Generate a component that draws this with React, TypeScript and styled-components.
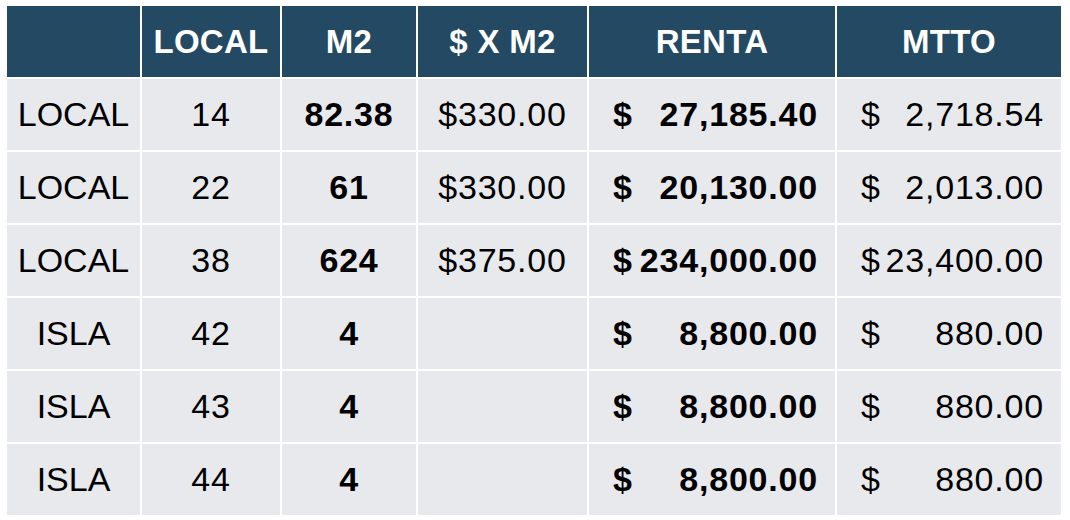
import React from 'react'
import styled, { createGlobalStyle } from 'styled-components'

const GlobalStyle = createGlobalStyle`
  html, body {
    margin: 0;
    padding: 0;
    background: #ffffff;
  }
`

const Page = styled.div`
  padding: 6px 7px;
  font-family: "Liberation Sans", Arial, sans-serif;
`

const Grid = styled.div`
  display: grid;
  grid-template-columns: 133px 138px 134px 169px 246px 224px;
  grid-auto-rows: 71px;
  gap: 2px;
  width: 1054px;
  background: #ffffff;
`

const HeadCell = styled.div`
  display: flex;
  align-items: center;
  justify-content: center;
  background: #234963;
  color: #ffffff;
  font-size: 33px;
  font-weight: 700;
  letter-spacing: 0.3px;
`

const Cell = styled.div<{ $bold?: boolean; $num?: boolean }>`
  display: flex;
  align-items: center;
  justify-content: center;
  background: #e8e9ed;
  color: #000000;
  font-size: 34px;
  font-weight: ${p => (p.$bold ? 700 : 400)};
  letter-spacing: ${p => (p.$num ? '0.8px' : '0')};
`

const MoneyCell = styled(Cell)`
  justify-content: space-between;
  padding: 0 17px 0 24px;
`

type Row = {
  kind: string
  local: string
  m2: string
  price: string
  renta: string
  mtto: string
}

const rows: Row[] = [
  { kind: 'LOCAL', local: '14', m2: '82.38', price: '$330.00', renta: '27,185.40', mtto: '2,718.54' },
  { kind: 'LOCAL', local: '22', m2: '61', price: '$330.00', renta: '20,130.00', mtto: '2,013.00' },
  { kind: 'LOCAL', local: '38', m2: '624', price: '$375.00', renta: '234,000.00', mtto: '23,400.00' },
  { kind: 'ISLA', local: '42', m2: '4', price: '', renta: '8,800.00', mtto: '880.00' },
  { kind: 'ISLA', local: '43', m2: '4', price: '', renta: '8,800.00', mtto: '880.00' },
  { kind: 'ISLA', local: '44', m2: '4', price: '', renta: '8,800.00', mtto: '880.00' },
]

function Money ({ value, bold }: { value: string; bold?: boolean }) {
  return (
    <MoneyCell $bold={bold} $num>
      <span>$</span>
      <span>{value}</span>
    </MoneyCell>
  )
}

export default function App () {
  return (
    <Page>
      <GlobalStyle />
      <Grid>
        <HeadCell />
        <HeadCell>LOCAL</HeadCell>
        <HeadCell>M2</HeadCell>
        <HeadCell>$ X M2</HeadCell>
        <HeadCell>RENTA</HeadCell>
        <HeadCell>MTTO</HeadCell>
        {rows.map((r, i) => (
          <React.Fragment key={i}>
            <Cell>{r.kind}</Cell>
            <Cell $num>{r.local}</Cell>
            <Cell $bold $num>{r.m2}</Cell>
            <Cell $num>{r.price}</Cell>
            <Money value={r.renta} bold />
            <Money value={r.mtto} />
          </React.Fragment>
        ))}
      </Grid>
    </Page>
  )
}
